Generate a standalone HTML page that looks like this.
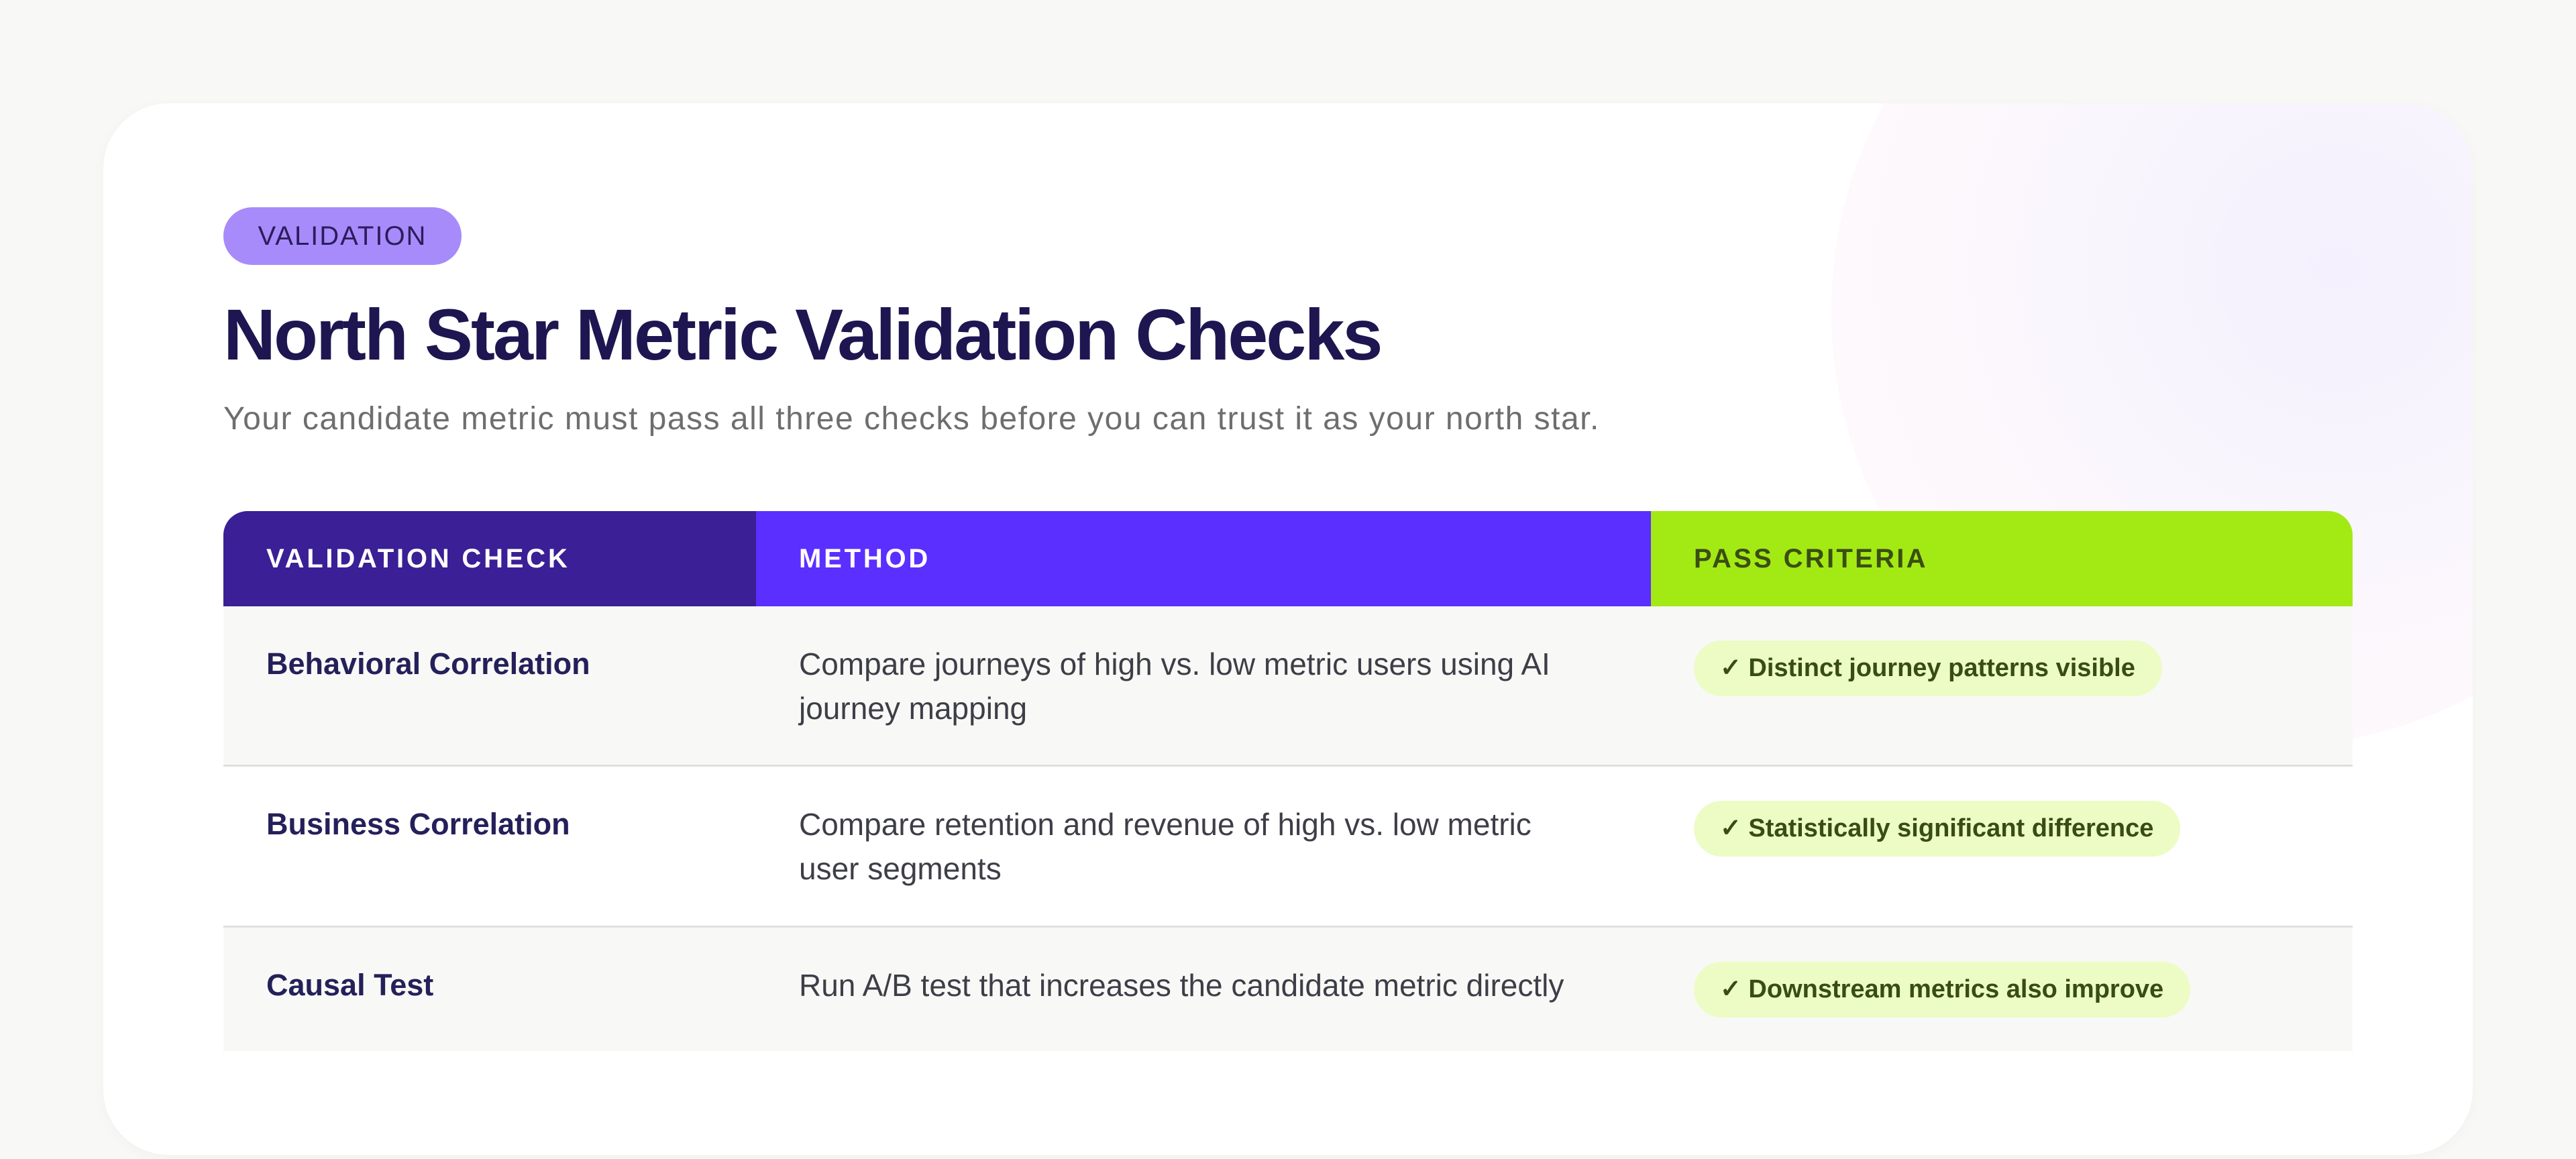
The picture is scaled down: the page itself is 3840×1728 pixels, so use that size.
<!DOCTYPE html>
<html><head><meta charset="utf-8">
<style>
*{margin:0;padding:0;box-sizing:border-box}
html,body{width:3840px;height:1728px;background:#f8f8f6;font-family:"Liberation Sans",sans-serif;overflow:hidden}
.card{position:absolute;left:154px;top:154px;width:3532px;height:1568px;background:#fff;border-radius:98px;overflow:hidden;box-shadow:0 4px 20px rgba(0,0,0,0.03)}
.blob{position:absolute;left:2576px;top:-340px;width:1300px;height:1300px;border-radius:50%;background:radial-gradient(circle at 58% 45%,#f4f0fd 0%,#faf6fd 40%,#fef9fc 70%,#fffbfd 100%)}
.badge{position:absolute;left:179px;top:155px;width:355px;height:86px;border-radius:43px;background:#a78bfa;color:#2b1d5c;font-size:40px;letter-spacing:2px;line-height:86px;text-align:center}
.title{position:absolute;left:179px;top:291px;font-size:108px;line-height:108px;font-weight:bold;color:#1e1650;letter-spacing:-3px}
.sub{position:absolute;left:179px;top:441px;font-size:48px;line-height:60px;color:#6e6e6e;letter-spacing:1.5px}
table{position:absolute;left:179px;top:608px;width:3174px;border-collapse:collapse}
th{height:142px;text-align:left;padding-left:64px;font-size:40px;letter-spacing:3.8px;font-weight:bold;color:#fff}
th.a{background:#3a1f96;width:794px;border-top-left-radius:36px}
th.b{background:#5b2fff;width:1334px}
th.c{background:#a3ea14;color:#3b4e12;border-top-right-radius:36px;letter-spacing:3.3px}
td{vertical-align:top;padding:53px 64px 0 64px;font-size:46px;line-height:66px;color:#3e3e48}
td.m{padding-right:115px}
td.n{font-weight:bold;color:#24205a;font-size:45px}
tr.r1{height:237px;background:#f8f8f6;border-bottom:3px solid #e0e0e0}
tr.r2{height:240px;background:#fff;border-bottom:3px solid #e0e0e0}
tr.r3{height:186px;background:#f8f8f6}
.pill{display:inline-block;margin-top:-2px;height:83px;line-height:83px;padding:0 40px 0 39px;border-radius:42px;background:#ecfcc4;color:#384d12;font-size:38px;font-weight:bold}
</style></head><body>
<div class="card">
<div class="blob"></div>
<div class="badge">VALIDATION</div>
<div class="title">North Star Metric Validation Checks</div>
<div class="sub">Your candidate metric must pass all three checks before you can trust it as your north star.</div>
<table>
<tr><th class="a">VALIDATION CHECK</th><th class="b">METHOD</th><th class="c">PASS CRITERIA</th></tr>
<tr class="r1"><td class="n">Behavioral Correlation</td><td class="m">Compare journeys of high vs. low metric users using AI journey mapping</td><td><span class="pill">✓ Distinct journey patterns visible</span></td></tr>
<tr class="r2"><td class="n">Business Correlation</td><td class="m">Compare retention and revenue of high vs. low metric user segments</td><td><span class="pill">✓ Statistically significant difference</span></td></tr>
<tr class="r3"><td class="n">Causal Test</td><td class="m">Run A/B test that increases the candidate metric directly</td><td><span class="pill">✓ Downstream metrics also improve</span></td></tr>
</table>
</div>
</body></html>
